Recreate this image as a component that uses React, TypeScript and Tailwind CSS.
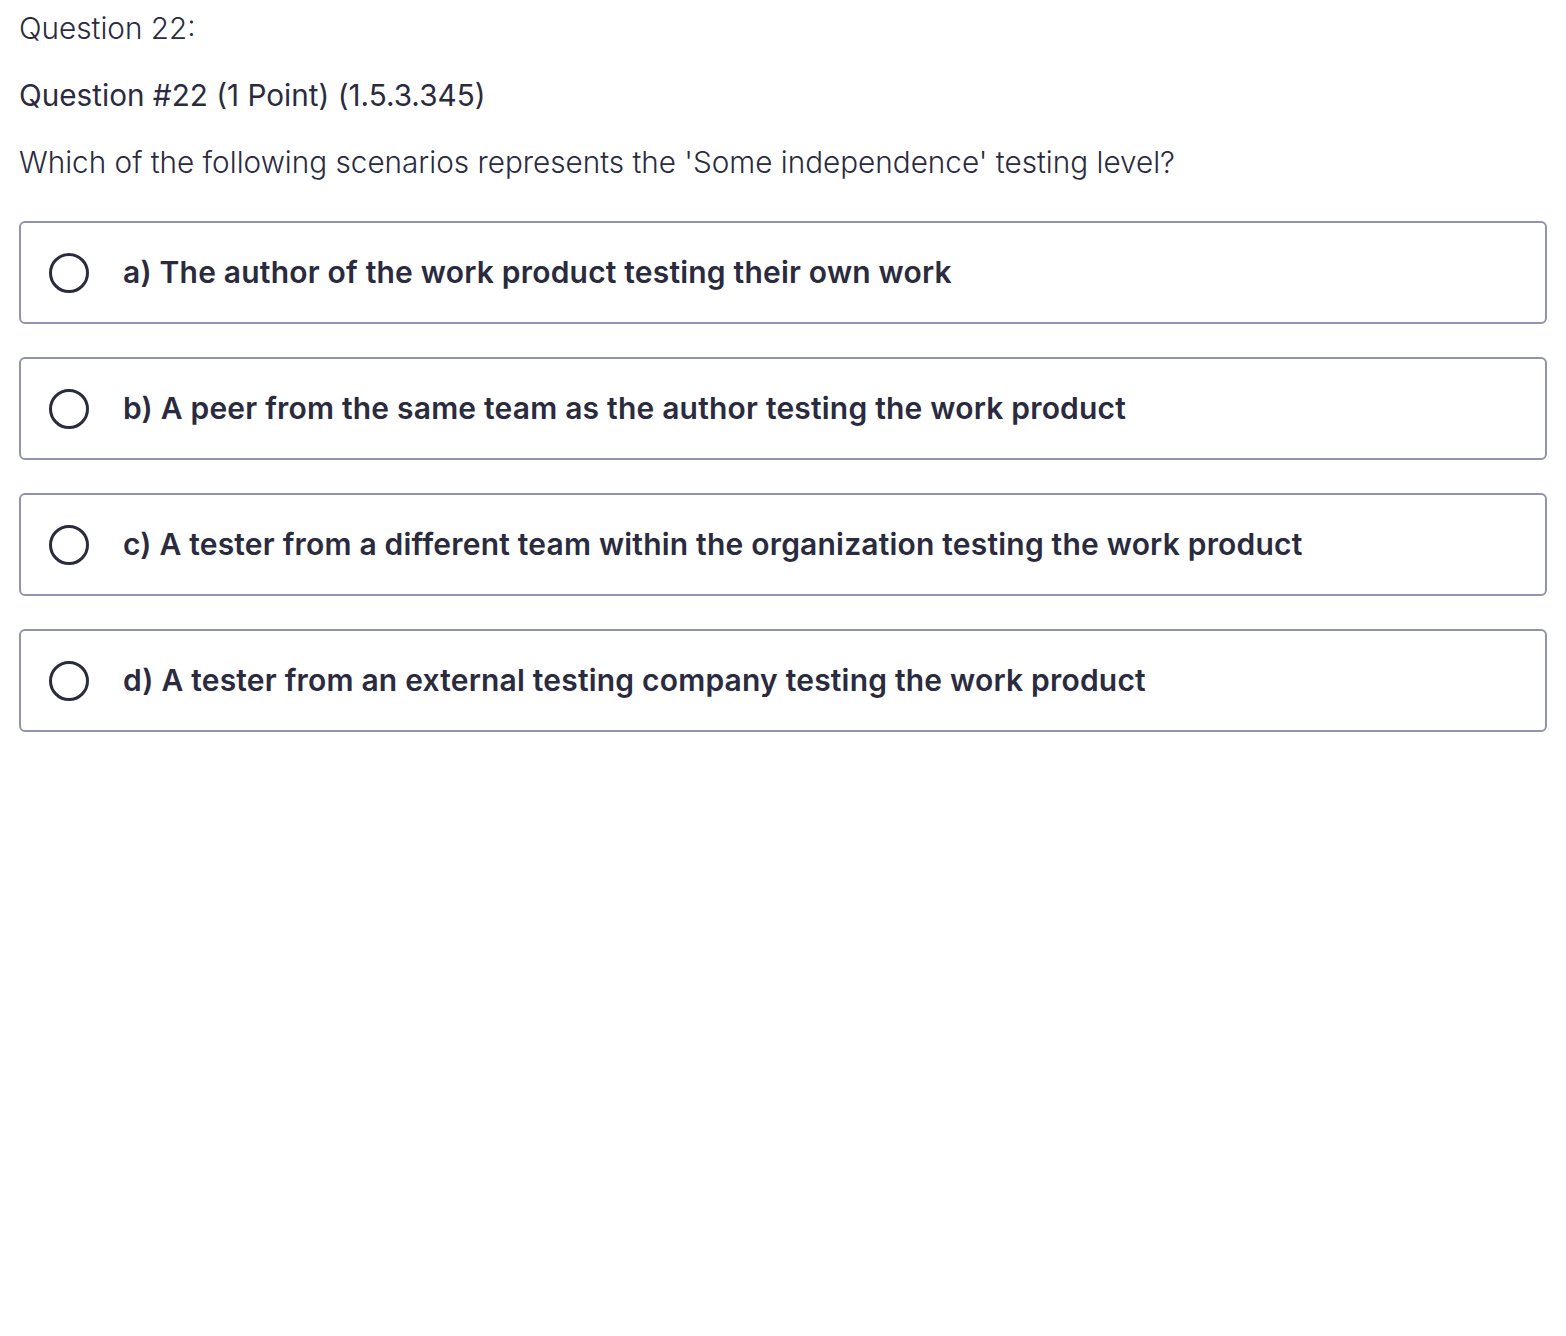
import React from "react";

const options = [
  "a) The author of the work product testing their own work",
  "b) A peer from the same team as the author testing the work product",
  "c) A tester from a different team within the organization testing the work product",
  "d) A tester from an external testing company testing the work product",
];

export default function App() {
  return (
    <div className="min-h-screen bg-white text-[#2d2f31] px-[19px] pt-[8px]" style={{ fontFamily: "Inter, 'Noto Sans', sans-serif" }}>
      <div className="text-[29.7px] font-light leading-[40px] text-[#2a2b3f]">Question 22:</div>
      <div className="mt-[27px] text-[29.7px] font-normal leading-[40px] text-[#2a2b3f]">Question #22 (1 Point) (1.5.3.345)</div>
      <div className="mt-[27px] text-[29.7px] font-light leading-[40px] text-[#2a2b3f]">Which of the following scenarios represents the 'Some independence' testing level?</div>
      <div className="mt-[39px] flex flex-col gap-[33px]">
        {options.map((o) => (
          <div key={o} className="flex h-[103px] items-center rounded-[6px] border-2 border-[#9194ac] pl-[28px]">
            <div className="h-[40px] w-[40px] shrink-0 rounded-full border-[3.5px] border-[#2a2b3f]" />
            <div className="ml-[34px] text-[30px] font-semibold tracking-[0.2px] text-[#2a2b3f]">{o}</div>
          </div>
        ))}
      </div>
    </div>
  );
}
